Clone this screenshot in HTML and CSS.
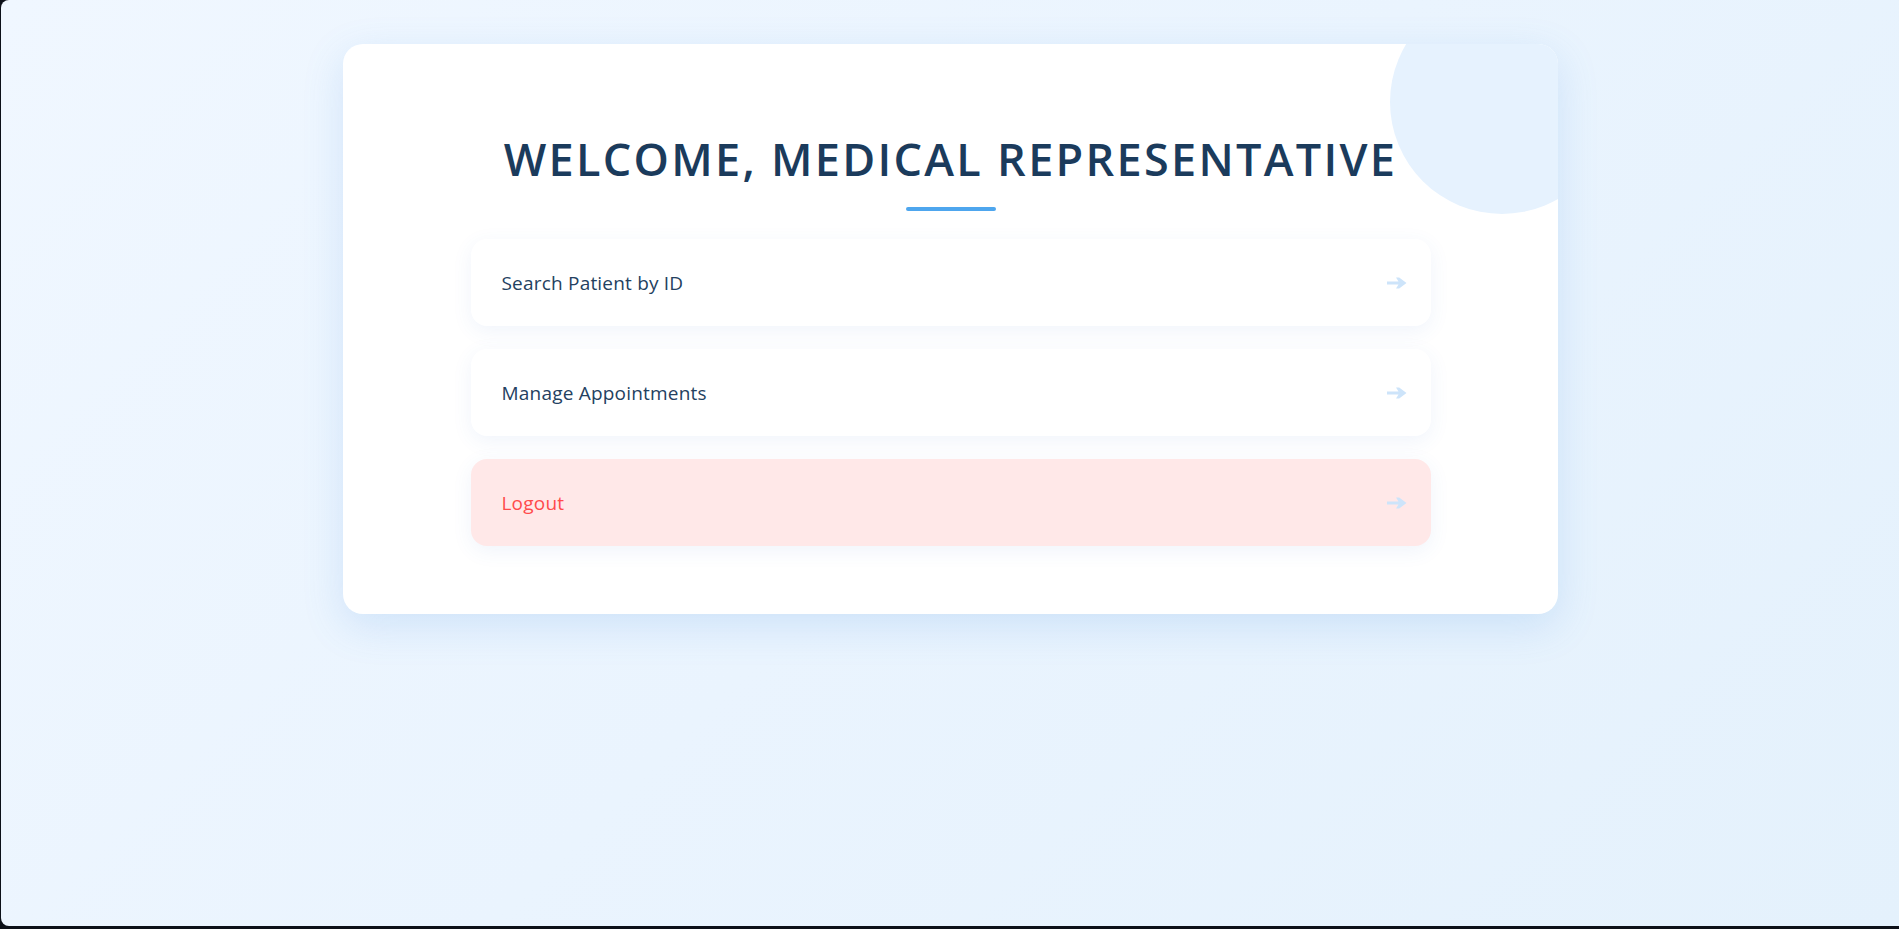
FILE: index.html
```html
<!DOCTYPE html>
<html lang="en">
<head>
<meta charset="utf-8">
<title>Medical Representative Dashboard</title>
<link rel="stylesheet" href="styles.css">
</head>
<body>
<div class="app">
  <main class="card">
    <div class="card-deco"></div>
    <h1 class="title">WELCOME, MEDICAL REPRESENTATIVE</h1>
    <div class="title-bar"></div>
    <nav class="menu">
      <a class="menu-item" href="#">
        <span class="menu-label">Search Patient by ID</span>
        <svg class="menu-arrow" width="20" height="12" viewBox="0 0 20 12"><polygon points="0,4.4 11.5,4.4 9,0.6 12.2,0.6 19.5,6 12.2,11.4 9,11.4 11.5,7.6 0,7.6"/></svg>
      </a>
      <a class="menu-item" href="#">
        <span class="menu-label">Manage Appointments</span>
        <svg class="menu-arrow" width="20" height="12" viewBox="0 0 20 12"><polygon points="0,4.4 11.5,4.4 9,0.6 12.2,0.6 19.5,6 12.2,11.4 9,11.4 11.5,7.6 0,7.6"/></svg>
      </a>
      <a class="menu-item menu-item-logout" href="#">
        <span class="menu-label">Logout</span>
        <svg class="menu-arrow" width="20" height="12" viewBox="0 0 20 12"><polygon points="0,4.4 11.5,4.4 9,0.6 12.2,0.6 19.5,6 12.2,11.4 9,11.4 11.5,7.6 0,7.6"/></svg>
      </a>
    </nav>
  </main>
</div>
</body>
</html>
```

FILE: styles.css
```css
* { box-sizing: border-box; }

html, body {
  margin: 0;
  padding: 0;
  height: 100%;
}

body {
  background: #0c1018;
  font-family: "Open Sans", "Liberation Sans", sans-serif;
}

.app {
  margin-left: 1px;
  height: 926px;
  border-radius: 8px 0 0 8px;
  background: linear-gradient(135deg, #f0f7ff 0%, #eaf4fe 50%, #e4f1fc 100%);
  display: flex;
  justify-content: center;
  align-items: flex-start;
  padding: 44px 0 0 1px;
  overflow: hidden;
}

.card {
  position: relative;
  overflow: hidden;
  width: 1215px;
  height: 570px;
  background: #ffffff;
  border-radius: 20px;
  box-shadow: 0 12px 40px rgba(80, 150, 230, 0.18);
  padding: 90px 0 0;
  display: flex;
  flex-direction: column;
  align-items: center;
}

.card-deco {
  position: absolute;
  top: -54px;
  right: -56px;
  width: 224px;
  height: 224px;
  border-radius: 50%;
  background: #e6f2fe;
}

.title {
  position: relative;
  margin: 0;
  font-size: 45px;
  line-height: 50px;
  font-weight: 600;
  letter-spacing: 2.3px;
  color: #1b3b5c;
}

.title-bar {
  width: 90px;
  height: 4px;
  border-radius: 2px;
  background: #4ea6ee;
  margin-top: 23px;
}

.menu {
  width: 960px;
  margin-top: 28px;
  display: flex;
  flex-direction: column;
  gap: 23px;
}

.menu-item {
  display: flex;
  align-items: center;
  justify-content: space-between;
  height: 87px;
  padding: 0 24px 0 31px;
  background: #ffffff;
  border-radius: 16px;
  box-shadow: 0 5px 20px rgba(60, 120, 200, 0.08);
  text-decoration: none;
}

.menu-label {
  font-size: 19px;
  letter-spacing: 0.2px;
  color: #24415f;
}

.menu-arrow {
  fill: #cde4fa;
}

.menu-item-logout {
  background: #ffe8e8;
}

.menu-item-logout .menu-label {
  color: #ff4b4b;
}
```
